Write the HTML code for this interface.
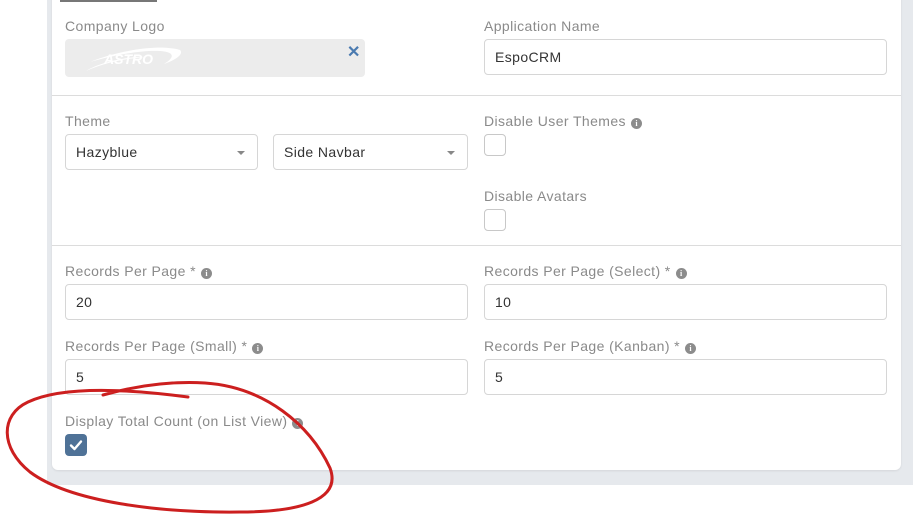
<!DOCTYPE html>
<html><head><meta charset="utf-8"><style>
*{box-sizing:border-box;margin:0;padding:0}
body{width:913px;height:515px;background:#fff;position:relative;overflow:hidden;font-family:"Liberation Sans",Arial,sans-serif}
.gray{position:absolute;left:47px;top:0;width:866px;height:485px;background:#e6e9ed}
.panel{position:absolute;left:52px;top:-5px;width:849px;height:475px;background:#fff;border-radius:0 0 6px 6px;box-shadow:0 1px 2px rgba(0,0,0,.08)}
.tab{position:absolute;left:60px;top:0;width:97px;height:2px;background:#777}
.lbl{position:absolute;font-size:14px;color:#8a8a8a;white-space:nowrap;letter-spacing:0.4px}
.inp{position:absolute;height:36px;border:1px solid #d6d6d6;border-radius:4px;background:#fff;font-size:14px;color:#333;padding:0 10px;line-height:34px;letter-spacing:0.4px}
.hr{position:absolute;left:52px;width:849px;height:1px;background:#dcdcdc}
.cb{position:absolute;width:22px;height:22px;border:1px solid #c8c8c8;border-radius:4px;background:#fff}
.i{display:inline-block;width:11px;height:11px;border-radius:50%;background:#8c8c8c;color:#fff;font-size:8px;line-height:11px;text-align:center;font-weight:bold;vertical-align:0px;margin-left:5px;letter-spacing:0;font-family:"Liberation Serif",serif}
.car{position:absolute;right:12px;top:16px;width:0;height:0;border-left:4px solid transparent;border-right:4px solid transparent;border-top:4px solid #888}
</style></head><body>
<div class="gray"></div>
<div class="panel"></div>
<div class="tab"></div>

<div class="lbl" style="left:65px;top:18px">Company Logo</div>
<div style="position:absolute;left:65px;top:39px;width:300px;height:38px;background:#ececec;border-radius:4px"></div>
<svg style="position:absolute;left:80px;top:42px" width="110" height="32" viewBox="0 0 110 32">
<path d="M6 29 C20 20 50 14 66 15 C40 17 22 22 6 29Z" fill="#fff"/>
<path d="M10 20 C40 8 80 2 100 8 C104 12 96 18 84 22 C94 16 96 10 80 9 C60 8 30 14 10 20Z" fill="#fff"/>
<text x="24" y="22" font-family="Liberation Sans" font-weight="bold" font-style="italic" font-size="14" fill="#fff">ASTRO</text>
</svg>
<div style="position:absolute;left:347px;top:42px;color:#4a7ab0;font-size:16px;font-weight:bold">✕</div>

<div class="lbl" style="left:484px;top:18px">Application Name</div>
<div class="inp" style="left:484px;top:39px;width:403px">EspoCRM</div>

<div class="hr" style="top:95px"></div>

<div class="lbl" style="left:65px;top:113px">Theme</div>
<div class="inp" style="left:65px;top:134px;width:193px">Hazyblue<div class="car"></div></div>
<div class="inp" style="left:273px;top:134px;width:195px">Side Navbar<div class="car"></div></div>
<div class="lbl" style="left:484px;top:113px">Disable User Themes<span class="i">i</span></div>
<div class="cb" style="left:484px;top:134px"></div>
<div class="lbl" style="left:484px;top:188px">Disable Avatars</div>
<div class="cb" style="left:484px;top:209px"></div>

<div class="hr" style="top:245px"></div>

<div class="lbl" style="left:65px;top:263px">Records Per Page *<span class="i">i</span></div>
<div class="inp" style="left:65px;top:284px;width:403px">20</div>
<div class="lbl" style="left:484px;top:263px">Records Per Page (Select) *<span class="i">i</span></div>
<div class="inp" style="left:484px;top:284px;width:403px">10</div>
<div class="lbl" style="left:65px;top:338px">Records Per Page (Small) *<span class="i">i</span></div>
<div class="inp" style="left:65px;top:359px;width:403px">5</div>
<div class="lbl" style="left:484px;top:338px">Records Per Page (Kanban) *<span class="i">i</span></div>
<div class="inp" style="left:484px;top:359px;width:403px">5</div>

<div class="lbl" style="left:65px;top:413px">Display Total Count (on List View)<span class="i">i</span></div>
<div style="position:absolute;left:65px;top:434px;width:22px;height:22px;border-radius:4px;background:#4f7297"></div>
<svg style="position:absolute;left:65px;top:434px" width="22" height="22"><path d="M6 11.5 L9.5 15 L16 7.5" fill="none" stroke="#fff" stroke-width="2.4" stroke-linecap="round" stroke-linejoin="round"/></svg>

<svg style="position:absolute;left:0;top:0" width="913" height="515">
<path d="M103 395 C135 386 170 381 205 383 C265 387 310 425 330 468 C342 500 300 512 240 512 C160 513 70 502 30 472 C0 448 0 415 28 402 C60 387 120 388 188 397" fill="none" stroke="#cc1f1f" stroke-width="3" stroke-linecap="round"/>
</svg>
</body></html>
